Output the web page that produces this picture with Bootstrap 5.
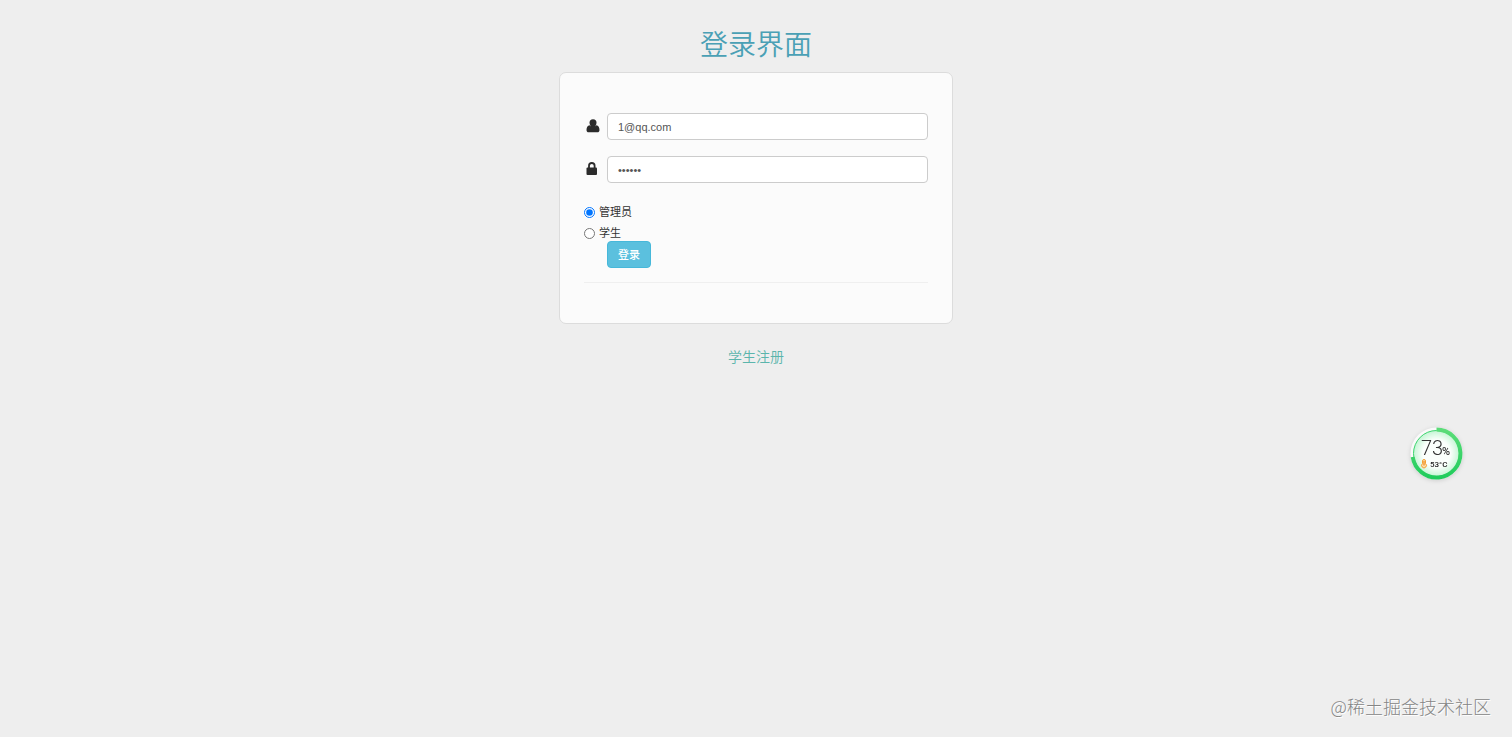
<!DOCTYPE html>
<html lang="zh-CN">
<head>
<meta charset="utf-8">
<meta name="viewport" content="width=device-width, initial-scale=1">
<title>登录界面</title>
<link href="https://cdn.jsdelivr.net/npm/bootstrap@5.3.0/dist/css/bootstrap.min.css" rel="stylesheet">
<style>
body { min-height: 100vh; background: #eee; color: #333; font-family: "Liberation Sans", "Noto Sans CJK SC", sans-serif; font-size: 11px; line-height: 16px; }
.login-title { color: #4aa0b5; font-size: 28px; line-height: 44px; font-weight: 350; }
.login-box { max-width: 394px; padding: 40px 24px; background: #fbfbfb; border: 1px solid #dcdcdc; border-radius: 7px; }
.field-icon { flex: 0 0 23px; height: 24px; padding-left: 2px; color: #2b2b2b; }
.login-box .form-control { height: 27px; padding: 0 10px; border-color: #ccc; border-radius: 4px; font-size: 11px; line-height: 16px; color: #555; }
.roles { gap: 5px; padding-top: 5px; }
.role { height: 16px; gap: 4px; }
.role input { width: 11px; height: 11px; margin: 0; }
.btn-login { height: 27px; margin-left: 23px; padding: 0 10px; background: #5bc0de; border-color: #46b8da; color: #fff; font-size: 11px; line-height: 16px; border-radius: 4px; font-weight: 500; }
.divider { margin: 14px 0 0; border-color: #e4e4e4; opacity: .5; }
.register { color: #5bb5ac; font-size: 14px; line-height: 18px; font-weight: 350; }
.gauge { right: 49px; top: 427px; width: 53px; height: 53px; filter: drop-shadow(0 1px 2px #0002); }
.watermark { padding: 0 21px 19px; color: #858585; font-family: "Noto Sans CJK SC", sans-serif; font-size: 18px; line-height: 24px; font-weight: 300; text-shadow: 1px 1px 0 #fff; }
</style>
</head>
<body class="d-flex flex-column position-relative">
<main class="d-flex flex-column align-items-center flex-grow-1 pt-4">
  <h1 class="login-title mb-1">登录界面</h1>
  <form class="login-box w-100">
    <div class="d-flex align-items-center mb-3">
      <label class="field-icon" for="email" aria-label="邮箱"><svg width="14" height="22" viewBox="0 0 14 22" fill="currentColor"><circle cx="7" cy="7.800" r="3.500"/><path d="M3.600 10.300C1.500 10.500.5 12.400.5 15c0 1.500.9 2.300 2.200 2.300h8.600c1.300 0 2.200-.8 2.200-2.300 0-2.600-1-4.500-3.100-4.700C9.500 11.300 8.400 12 7 12s-2.500-.7-3.400-1.700z"/><path d="M4.500 10h5v2h-5z"/></svg></label>
      <input class="form-control" type="text" id="email" value="1@qq.com">
    </div>
    <div class="d-flex align-items-center mb-3">
      <label class="field-icon" for="password" aria-label="密码"><svg width="12" height="22" viewBox="0 0 12 22"><path d="M3 10V7.800a2.800 2.800 0 0 1 5.600 0V10" fill="none" stroke="currentColor" stroke-width="1.800"/><rect x=".5" y="9.500" width="10.500" height="7.500" rx="1" fill="currentColor"/></svg></label>
      <input class="form-control" type="password" id="password" value="123456">
    </div>
    <div class="roles d-flex flex-column">
      <div class="role d-flex align-items-center"><input type="radio" name="role" id="admin" checked><label for="admin">管理员</label></div>
      <div class="role d-flex align-items-center"><input type="radio" name="role" id="student"><label for="student">学生</label></div>
    </div>
    <button class="btn btn-login" type="submit">登录</button>
    <hr class="divider">
  </form>
  <a class="register text-decoration-none mt-4" href="#">学生注册</a>
</main>
<aside class="gauge position-absolute" aria-label="系统状态">
  <svg width="53" height="53" viewBox="0 0 53 53">
    <defs><radialGradient id="glow"><stop offset=".6" stop-color="#fbfffc"/><stop offset="1" stop-color="#c4f5d4"/></radialGradient>
    <linearGradient id="ring" x2="0" y2="1"><stop stop-color="#5bdc78"/><stop offset="1" stop-color="#20cc5c"/></linearGradient></defs>
    <circle cx="26.500" cy="26.500" r="26" fill="#fafafa"/>
    <circle cx="26.500" cy="26.500" r="23" fill="url(#glow)" stroke="#3bd56d" stroke-width="1"/>
    <path d="M26.500 2.500A24 24 0 1 1 2.700 30" fill="none" stroke="url(#ring)" stroke-width="4"/>
    <text x="11" y="28" font-family="Roboto" font-weight="300" font-size="20" fill="#333">73</text>
    <text x="32" y="28" font-family="Roboto" font-weight="500" font-size="11" fill="#333">%</text>
    <text x="20" y="40" font-family="Roboto" font-weight="500" font-size="8" fill="#222">53°C</text>
    <path d="M12.500 34a1.500 1.500 0 0 1 3 0v2.600a2.400 2.400 0 1 1-3 0z" fill="#ffe0ae" stroke="#f5a132"/><path d="M14 34v4.500" stroke="#f08a1c" stroke-width="1.200"/>
  </svg>
</aside>
<footer class="watermark text-end">@稀土掘金技术社区</footer>
<script src="https://cdn.jsdelivr.net/npm/bootstrap@5.3.0/dist/js/bootstrap.bundle.min.js"></script>
</body>
</html>
